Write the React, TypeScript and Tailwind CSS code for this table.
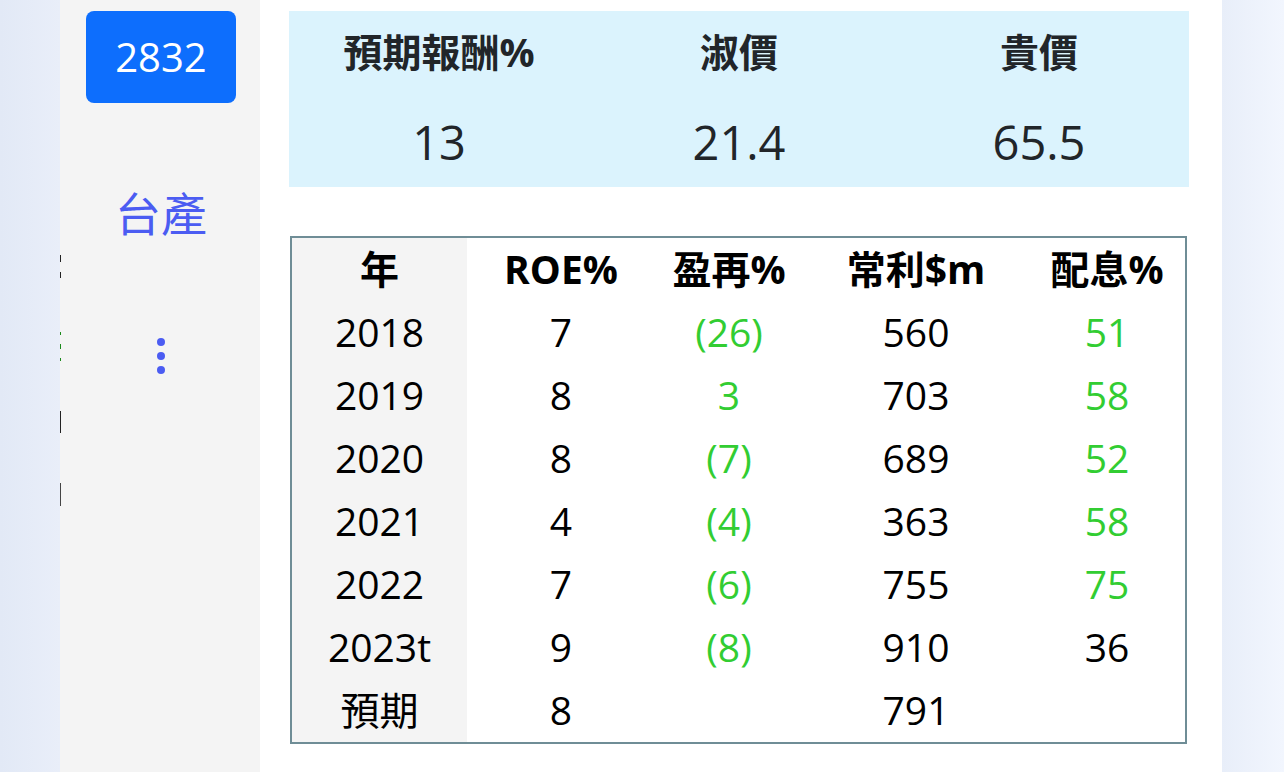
import React from 'react'

const ROWS = [
    { year: '2018', roe: '7', growth: '(26)', profit: '560', payout: '51', payoutGreen: true },
    { year: '2019', roe: '8', growth: '3', profit: '703', payout: '58', payoutGreen: true },
    { year: '2020', roe: '8', growth: '(7)', profit: '689', payout: '52', payoutGreen: true },
    { year: '2021', roe: '4', growth: '(4)', profit: '363', payout: '58', payoutGreen: true },
    { year: '2022', roe: '7', growth: '(6)', profit: '755', payout: '75', payoutGreen: true },
    { year: '2023t', roe: '9', growth: '(8)', profit: '910', payout: '36', payoutGreen: false },
    { year: '預期', roe: '8', growth: '', profit: '791', payout: '', payoutGreen: false },
]

const SUMMARY = [
    { label: '預期報酬%', value: '13' },
    { label: '淑價', value: '21.4' },
    { label: '貴價', value: '65.5' },
]

// bits of text clipped behind the sidebar edge
const EdgeMarks = () => (
    <div className="flex flex-col w-px shrink-0">
        <div className="h-[255px]" />
        <div className="h-[7px] bg-[#222]" />
        <div className="h-[10px]" />
        <div className="h-[6px] bg-[#222]" />
        <div className="h-[54px]" />
        <div className="h-[3px] bg-[#1a8a1a]" />
        <div className="h-[9px]" />
        <div className="h-[5px] bg-[#1a8a1a]" />
        <div className="h-[9px]" />
        <div className="h-[3px] bg-[#1a8a1a]" />
        <div className="h-[50px]" />
        <div className="h-[22px] bg-[#222]" />
        <div className="h-[50px]" />
        <div className="h-[23px] bg-[#444]" />
    </div>
)

const Sidebar = () => (
    <div className="flex w-[200px] shrink-0 bg-[#f4f4f4]">
        <EdgeMarks />
        <div className="flex flex-col items-center flex-1 pt-[11px] pl-px">
            <div className="w-[150px] h-[92px] rounded-lg bg-[#0d6efd] text-white text-[40px] flex items-center justify-center">
                2832
            </div>
            <div className="mt-[83px] text-[46px] leading-[54px] text-[#4b5cf2]">台產</div>
            <div className="mt-[98px] flex flex-col gap-[6px]">
                <div className="w-2 h-2 rounded-full bg-[#4b5cf2]" />
                <div className="w-2 h-2 rounded-full bg-[#4b5cf2]" />
                <div className="w-2 h-2 rounded-full bg-[#4b5cf2]" />
            </div>
        </div>
    </div>
)

const Summary = () => (
    <div className="grid grid-cols-3 h-[176px] bg-[#dbf3fd] text-[#212529]">
        {SUMMARY.map((s) => (
            <div key={s.label} className="flex flex-col items-center pt-[17px]">
                <div className="text-[39px] leading-[48px] font-bold">{s.label}</div>
                <div className="mt-[38px] text-[47px] leading-[56px]">{s.value}</div>
            </div>
        ))}
    </div>
)

const cellCls = 'h-[63px] p-0 text-center align-middle'

const DataTable = () => (
    <table className="mt-[49px] ml-px w-[897px] border-2 border-[#6f8d96] border-separate border-spacing-0 table-fixed text-[39px] text-black">
        <colgroup>
            <col className="w-[175px]" />
            <col className="w-[188px]" />
            <col className="w-[148px]" />
            <col className="w-[226px]" />
            <col />
        </colgroup>
        <thead>
            <tr className="font-bold">
                <th className={cellCls + ' bg-[#f4f4f4]'}>年</th>
                <th className={cellCls}>ROE%</th>
                <th className={cellCls}>盈再%</th>
                <th className={cellCls}>常利$m</th>
                <th className={cellCls}>配息%</th>
            </tr>
        </thead>
        <tbody>
            {ROWS.map((r) => (
                <tr key={r.year}>
                    <td className={cellCls + ' bg-[#f4f4f4]'}>{r.year}</td>
                    <td className={cellCls}>{r.roe}</td>
                    <td className={cellCls + ' text-[#32cd32]'}>{r.growth}</td>
                    <td className={cellCls}>{r.profit}</td>
                    <td className={cellCls + (r.payoutGreen ? ' text-[#32cd32]' : '')}>{r.payout}</td>
                </tr>
            ))}
        </tbody>
    </table>
)

export default function App() {
    return (
        <div className="flex w-[1284px] h-[772px] overflow-hidden font-['Open_Sans','Noto_Sans_CJK_TC',sans-serif]">
            <div className="w-[60px] shrink-0 bg-gradient-to-r from-[#e2e9f6] to-[#e9eef9]" />
            <Sidebar />
            <div className="w-[962px] shrink-0 bg-white pl-[29px] pr-[33px] pt-[11px]">
                <Summary />
                <DataTable />
            </div>
            <div className="flex-1 bg-gradient-to-r from-[#e8eef9] to-[#f2f6fe]" />
        </div>
    )
}
